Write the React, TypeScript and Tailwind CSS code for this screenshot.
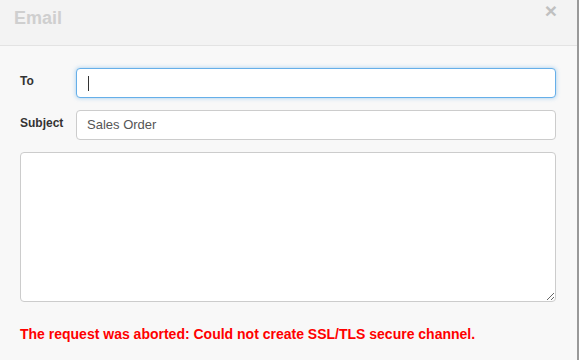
export default function App() {
  return (
    <div className="w-[579px] h-[360px] flex bg-white font-['Liberation_Sans',Arial,sans-serif]">
      <div className="flex-1 flex flex-col bg-[#f8f8f8]">
        <div className="h-[46px] flex items-start justify-between bg-[#f3f3f3] border-b border-[#e3e3e3] pl-[14px] pr-[20px]">
          <h4 className="mt-[6px] text-[18px] leading-[24px] font-bold text-[#cfcfcf]">Email</h4>
          <span className="mt-[1px] text-[21px] leading-[20px] font-bold text-[#c0c0c0]">×</span>
        </div>
        <div className="flex flex-col pl-[20px] pr-[21px] pt-[22px]">
          <div className="flex items-center h-[30px]">
            <label className="w-[56px] pb-[4px] text-[12px] font-bold text-[#333]">To</label>
            <div className="flex-1 h-[30px] flex items-center px-[11px] bg-white border border-[#66afe9] rounded-[4px] shadow-[0_0_4px_rgba(102,175,233,0.6)]">
              <span className="w-px h-[15px] bg-[#333]" />
            </div>
          </div>
          <div className="flex items-center h-[30px] mt-[12px]">
            <label className="w-[56px] pb-[4px] text-[12px] font-bold text-[#333]">Subject</label>
            <div className="flex-1 h-[30px] flex items-center px-[10px] bg-white border border-[#ccc] rounded-[4px] text-[13px] text-[#555]">
              Sales Order
            </div>
          </div>
          <textarea className="mt-[12px] h-[150px] w-full bg-white border border-[#ccc] rounded-[4px] resize-y outline-none" />
          <p className="mt-[22px] text-[14px] font-bold text-[#ff0000]">
            The request was aborted: Could not create SSL/TLS secure channel.
          </p>
        </div>
      </div>
      <div className="w-[2px] bg-[#999]" />
    </div>
  );
}
